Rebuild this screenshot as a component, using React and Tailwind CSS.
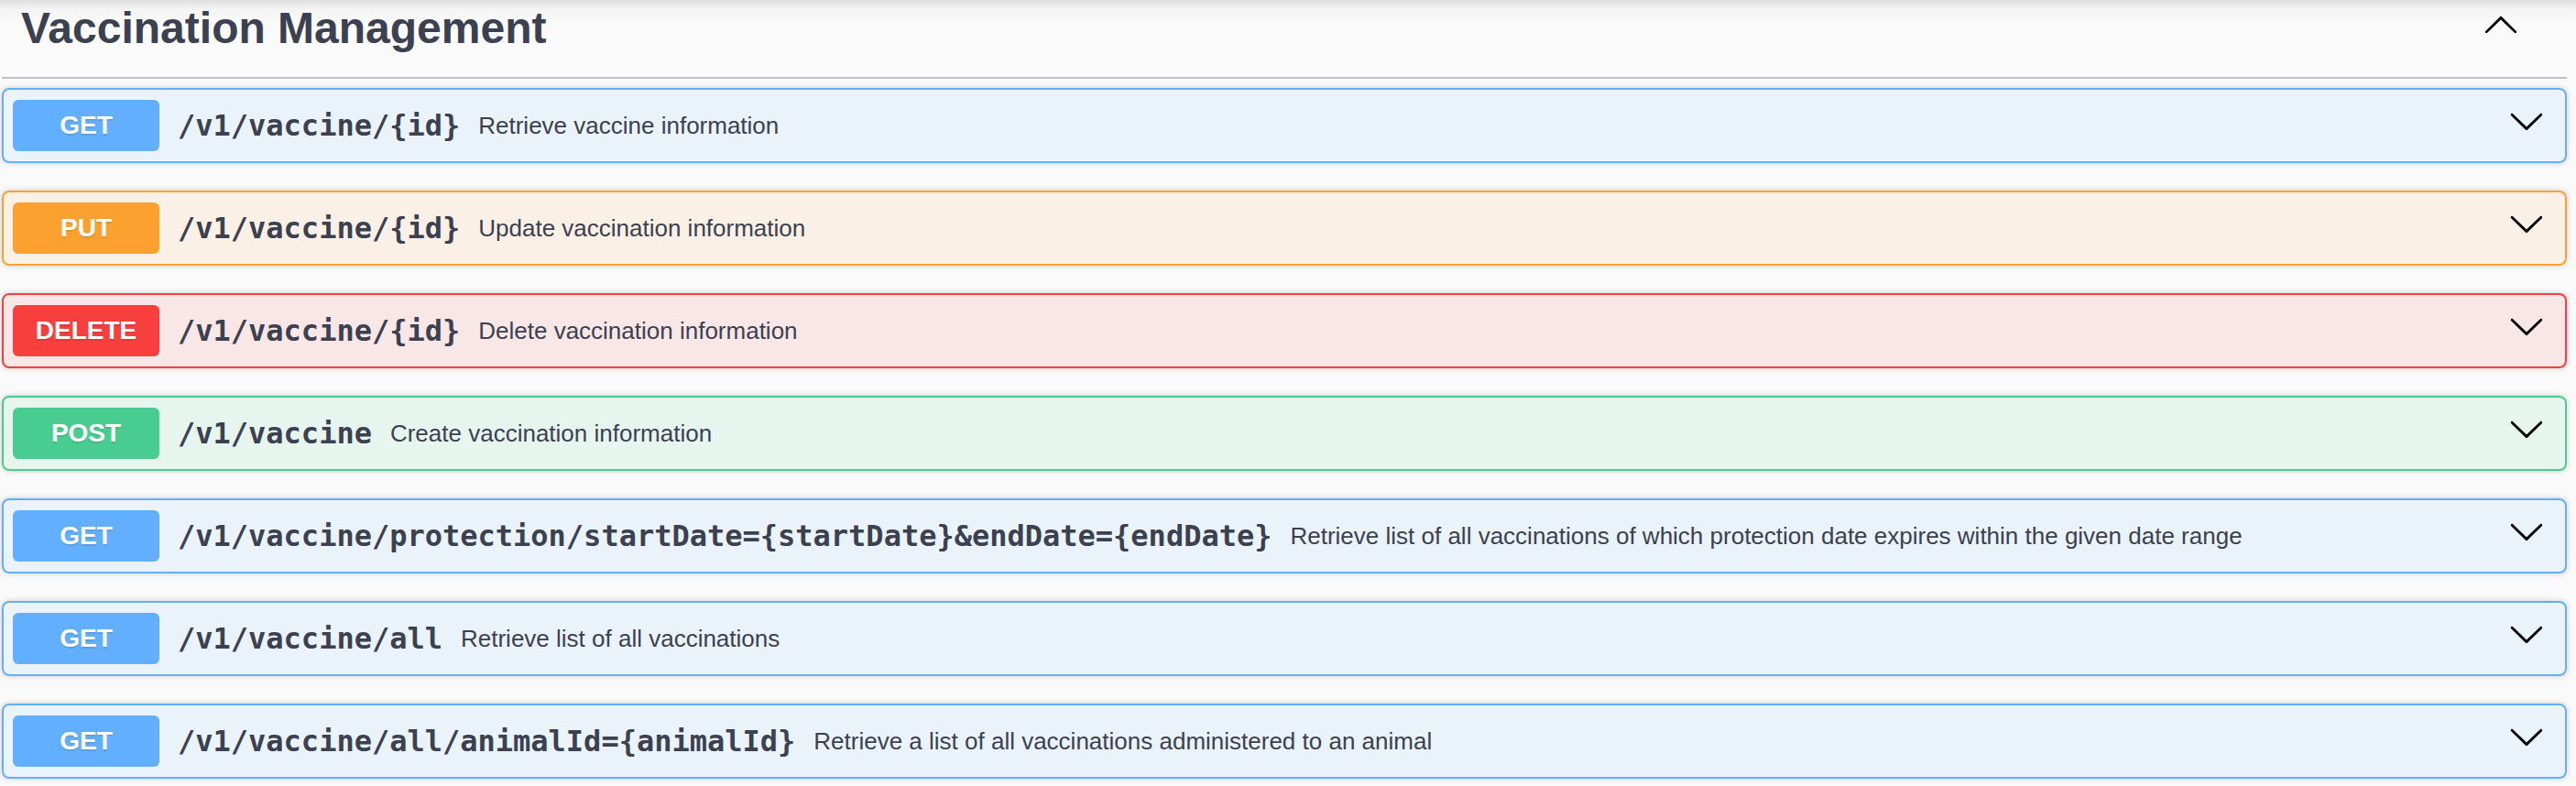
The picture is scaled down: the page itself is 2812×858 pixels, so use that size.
import React from "react";

const METHODS = {
  GET: { row: "border-[#61affe] bg-[rgba(97,175,254,0.1)]", badge: "bg-[#61affe]" },
  PUT: { row: "border-[#fca130] bg-[rgba(252,161,48,0.1)]", badge: "bg-[#fca130]" },
  DELETE: { row: "border-[#f93e3e] bg-[rgba(249,62,62,0.1)]", badge: "bg-[#f93e3e]" },
  POST: { row: "border-[#49cc90] bg-[rgba(73,204,144,0.1)]", badge: "bg-[#49cc90]" },
};

const OPS = [
  { method: "GET", path: "/v1/vaccine/{id}", desc: "Retrieve vaccine information" },
  { method: "PUT", path: "/v1/vaccine/{id}", desc: "Update vaccination information" },
  { method: "DELETE", path: "/v1/vaccine/{id}", desc: "Delete vaccination information" },
  { method: "POST", path: "/v1/vaccine", desc: "Create vaccination information" },
  {
    method: "GET",
    path: "/v1/vaccine/protection/startDate={startDate}&endDate={endDate}",
    desc: "Retrieve list of all vaccinations of which protection date expires within the given date range",
  },
  { method: "GET", path: "/v1/vaccine/all", desc: "Retrieve list of all vaccinations" },
  {
    method: "GET",
    path: "/v1/vaccine/all/animalId={animalId}",
    desc: "Retrieve a list of all vaccinations administered to an animal",
  },
];

function ArrowDown() {
  return (
    <svg viewBox="0 0 20 20" className="w-[40px] h-[40px] shrink-0 self-start mt-[3px]" fill="#000">
      <path d="M17.418 6.109c.272-.268.709-.268.979 0s.271.701 0 .969l-7.908 7.83c-.27.268-.707.268-.979 0l-7.908-7.83c-.27-.268-.27-.701 0-.969.271-.268.709-.268.979 0L10 13.25l7.418-7.141z" />
    </svg>
  );
}

function ArrowUp() {
  return (
    <svg viewBox="0 0 20 20" className="w-[40px] h-[40px] shrink-0 mt-[6px]" fill="#000">
      <path d="M 17.418 14.908 C 17.69 15.176 18.127 15.176 18.397 14.908 C 18.667 14.64 18.668 14.207 18.397 13.939 L 10.489 6.109 C 10.219 5.841 9.782 5.841 9.51 6.109 L 1.602 13.939 C 1.332 14.207 1.332 14.64 1.602 14.908 C 1.873 15.176 2.311 15.176 2.581 14.908 L 10 7.767 L 17.418 14.908 Z" />
    </svg>
  );
}

function Op({ method, path, desc }) {
  const m = METHODS[method];
  return (
    <div
      className={`flex items-center mb-[30px] rounded-[8px] border-2 ${m.row} shadow-[0_0_6px_rgba(0,0,0,0.19)] pl-[10px] pr-[22px] py-[11px]`}
    >
      <span
        className={`w-[160px] h-[56px] shrink-0 flex items-center justify-center rounded-[6px] ${m.badge} text-white font-bold text-[28px] font-['Liberation_Sans',Arial,sans-serif] [text-shadow:0_2px_0_rgba(0,0,0,0.1)]`}
      >
        {method}
      </span>
      <span className="px-[20px] font-['DejaVu_Sans_Mono',monospace] font-bold text-[32px] text-[#3b4151] whitespace-nowrap">
        {path}
      </span>
      <span className="flex-1 text-[26px] text-[#3b4151] font-['Liberation_Sans',Arial,sans-serif] whitespace-nowrap">
        {desc}
      </span>
      <ArrowDown />
    </div>
  );
}

export default function App() {
  return (
    <div className="min-h-screen bg-[#fafafa] bg-[linear-gradient(to_bottom,#dedede_0px,#f4f4f4_10px,#fafafa_24px)] pl-[2px] pr-[10px] overflow-hidden">
      <div className="flex items-start justify-between h-[86px] border-b-2 border-[rgba(59,65,81,0.3)] pl-[21px] pr-[52px]">
        <span className="mt-[4px] text-[48px] leading-[54px] font-bold text-[#3b4151] font-['Liberation_Sans',Arial,sans-serif]">
          Vaccination Management
        </span>
        <ArrowUp />
      </div>
      <div className="pt-[10px]">
        {OPS.map((op, i) => (
          <Op key={i} {...op} />
        ))}
      </div>
    </div>
  );
}
